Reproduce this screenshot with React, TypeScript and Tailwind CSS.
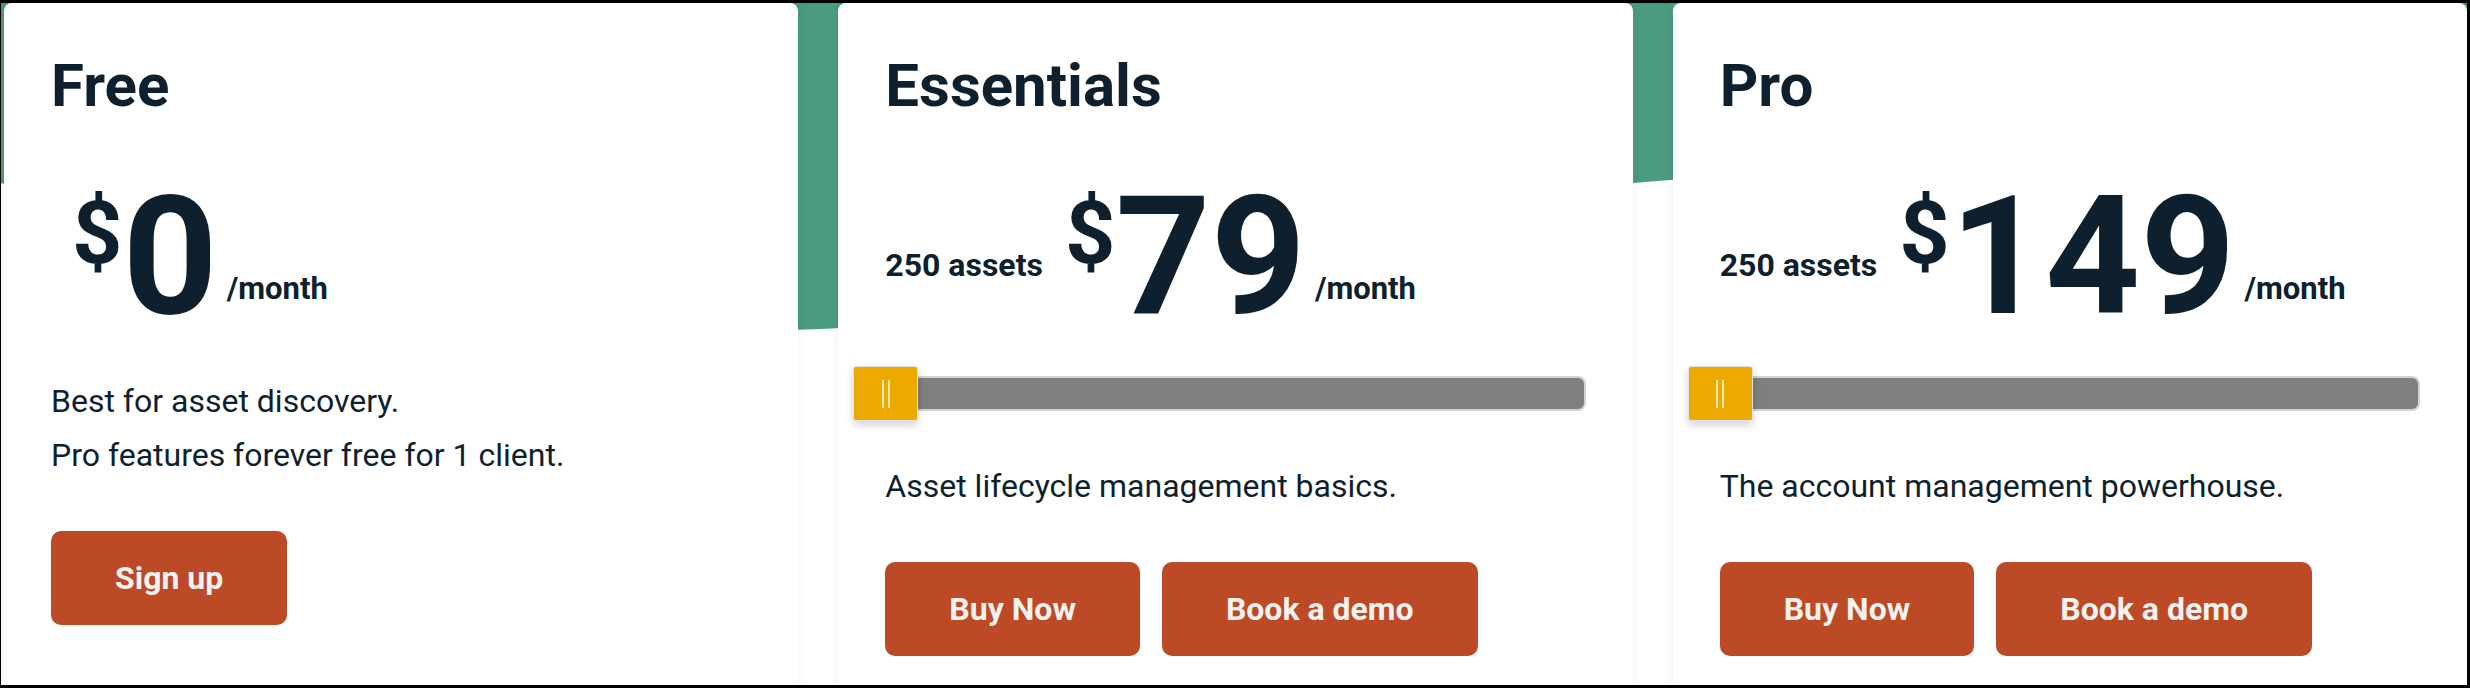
const plans = [
  {
    name: "Free",
    assets: "",
    price: "0",
    lines: ["Best for asset discovery.", "Pro features forever free for 1 client."],
    slider: false,
    buttons: ["Sign up"],
  },
  {
    name: "Essentials",
    assets: "250 assets",
    price: "79",
    lines: ["Asset lifecycle management basics."],
    slider: true,
    buttons: ["Buy Now", "Book a demo"],
  },
  {
    name: "Pro",
    assets: "250 assets",
    price: "149",
    lines: ["The account management powerhouse."],
    slider: true,
    buttons: ["Buy Now", "Book a demo"],
  },
];

type Plan = (typeof plans)[number];

function Slider() {
  return (
    <div className="relative mt-[26px] flex h-[55px] items-center">
      <div className="h-[35px] w-full rounded-r-lg border-2 border-[#d2d2d2] bg-[#7f7f80]" />
      <div className="absolute left-[-32px] top-0 flex h-[55px] w-[65px] items-center justify-center gap-[4px] rounded-[3px] border border-[#e2e2e2] bg-[#ecaa00] shadow-[0_4px_8px_rgba(0,0,0,0.18)]">
        <span className="h-[28px] w-[2px] bg-[#f7e6b0]" />
        <span className="h-[28px] w-[2px] bg-[#f7e6b0]" />
      </div>
    </div>
  );
}

function PlanCard({ plan }: { plan: Plan }) {
  return (
    <div className="flex-1 rounded-t-lg bg-white px-[47px] pt-[53px] shadow-[0_0_10px_rgba(0,0,0,0.07)]">
      <h2 className="text-[60px] font-bold leading-none">{plan.name}</h2>

      <div className={`mt-[58px] flex items-end ${plan.assets ? "" : "pl-[21px]"}`}>
        {plan.assets && (
          <span className="mb-[59px] mr-[22px] text-[32px] font-bold leading-none">
            {plan.assets}
          </span>
        )}
        <span className="mt-[15px] self-start text-[88px] font-bold leading-none">$</span>
        <span className="text-[166px] font-bold leading-none">{plan.price}</span>
        <span className="mb-[36px] ml-[9px] text-[31px] font-bold leading-none">/month</span>
      </div>

      {plan.slider && <Slider />}

      <div className={plan.slider ? "mt-[45px]" : "mt-[41px]"}>
        {plan.lines.map((line, i) => (
          <p key={line} className={`text-[32px] leading-[40px] ${i > 0 ? "mt-[14px]" : ""}`}>
            {line}
          </p>
        ))}
      </div>

      <div className="mt-[56px] flex gap-[22px]">
        {plan.buttons.map((label) => (
          <button
            key={label}
            className="h-[94px] rounded-[10px] bg-[#bc4a27] px-16 text-[32px] font-bold text-[#f6f2f0]"
          >
            {label}
          </button>
        ))}
      </div>
    </div>
  );
}

export default function App() {
  return (
    <div className="h-[688px] w-[2470px] overflow-hidden border-b-[3px] border-l border-r-[3px] border-t-[3px] border-black font-[Roboto,sans-serif] text-[#0e1f2d]">
      <div className="relative h-full bg-white">
        <svg
          className="absolute left-0 top-0 h-[340px] w-full"
          viewBox="0 0 2466 340"
          preserveAspectRatio="none"
        >
          <path
            d="M0 180 C 350 300, 600 335, 820 326 S 1400 190, 1700 175 S 2300 230, 2466 280 L 2466 0 L 0 0 Z"
            fill="#4a9c7e"
          />
        </svg>
        <div className="relative flex h-full gap-[40px] pl-[3px]">
          {plans.map((plan) => (
            <PlanCard key={plan.name} plan={plan} />
          ))}
        </div>
      </div>
    </div>
  );
}
